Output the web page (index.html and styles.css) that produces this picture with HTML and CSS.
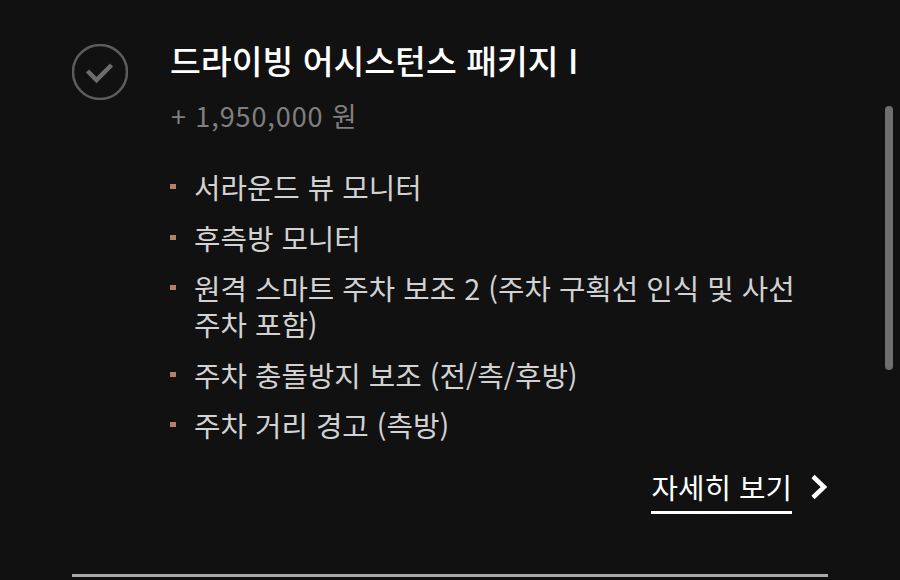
FILE: index.html
```html
<!DOCTYPE html>
<html lang="ko">
<head>
<meta charset="utf-8">
<title>드라이빙 어시스턴스 패키지 I</title>
<link rel="stylesheet" href="styles.css">
</head>
<body>
<main class="page">
  <section class="option">
    <svg class="check" viewBox="0 0 56 56" width="56" height="56" aria-hidden="true">
      <circle cx="28" cy="28" r="27" fill="none" stroke="#5c5c5c" stroke-width="2.500"/>
      <path d="M15.500 27 L24.500 36 L39.500 21" fill="none" stroke="#6c6c6c" stroke-width="4.500"/>
    </svg>
    <div class="body">
      <h1 class="title">드라이빙 어시스턴스 패키지 I</h1>
      <p class="price">+ 1,950,000 원</p>
      <ul class="list">
        <li>서라운드 뷰 모니터</li>
        <li>후측방 모니터</li>
        <li>원격 스마트 주차 보조 2 (주차 구획선 인식 및 사선 주차 포함)</li>
        <li>주차 충돌방지 보조 (전/측/후방)</li>
        <li>주차 거리 경고 (측방)</li>
      </ul>
      <div class="more-row">
        <a class="more" href="#">자세히 보기</a>
        <svg class="chev" viewBox="0 0 18 26" width="18" height="26" aria-hidden="true">
          <path d="M3 2.500 L14 13 L3 23.500" fill="none" stroke="#fff" stroke-width="4.500"/>
        </svg>
      </div>
    </div>
  </section>
  <hr class="rule">
</main>
<div class="scrollbar"></div>
</body>
</html>
```
FILE: styles.css
```css
* { box-sizing: border-box; }
html, body { margin: 0; height: 100%; overflow: hidden; }
body {
  background: #111112;
  font-family: "Noto Sans CJK KR", "Noto Sans", sans-serif;
  color: #fff;
}
.page { width: 828px; margin-left: 72px; padding-top: 43px; }
.option { display: flex; height: 531px; }
.check { flex: none; margin-right: 43px; margin-top: 1px; }
.body { flex: 1; min-width: 0; }
.title { margin: -2px 0 0 -1px; font-size: 33.500px; line-height: 38px; font-weight: 500; }
.price { margin: 18px 0 0; font-size: 27px; letter-spacing: 0.900px; line-height: 38px; color: #7f7f7f; }
.list { margin: 34px 0 0; padding: 0; list-style: none; color: #d2d2d2; font-size: 28.750px; line-height: 36px; }
.list li { position: relative; padding-left: 23px; margin-bottom: 14.500px; width: 640px; }
.list li::before { content: ""; position: absolute; left: -1px; top: 15px; width: 6px; height: 5px; background: #b5806a; }
.more-row { display: flex; align-items: center; justify-content: flex-end; margin-top: 26px; width: 657px; }
.more { color: #fff; text-decoration: none; font-size: 28.800px; line-height: 36px; padding-bottom: 6px; border-bottom: 3px solid #fff; }
.chev { margin-left: 18px; margin-bottom: 9px; }
.rule { margin: 0; width: 756px; height: 3px; border: 0; background: #aaaaaa; }
.scrollbar { position: absolute; left: 885px; top: 106px; width: 8px; height: 264px; border-radius: 4px; background: #6f6f6f; }
```
